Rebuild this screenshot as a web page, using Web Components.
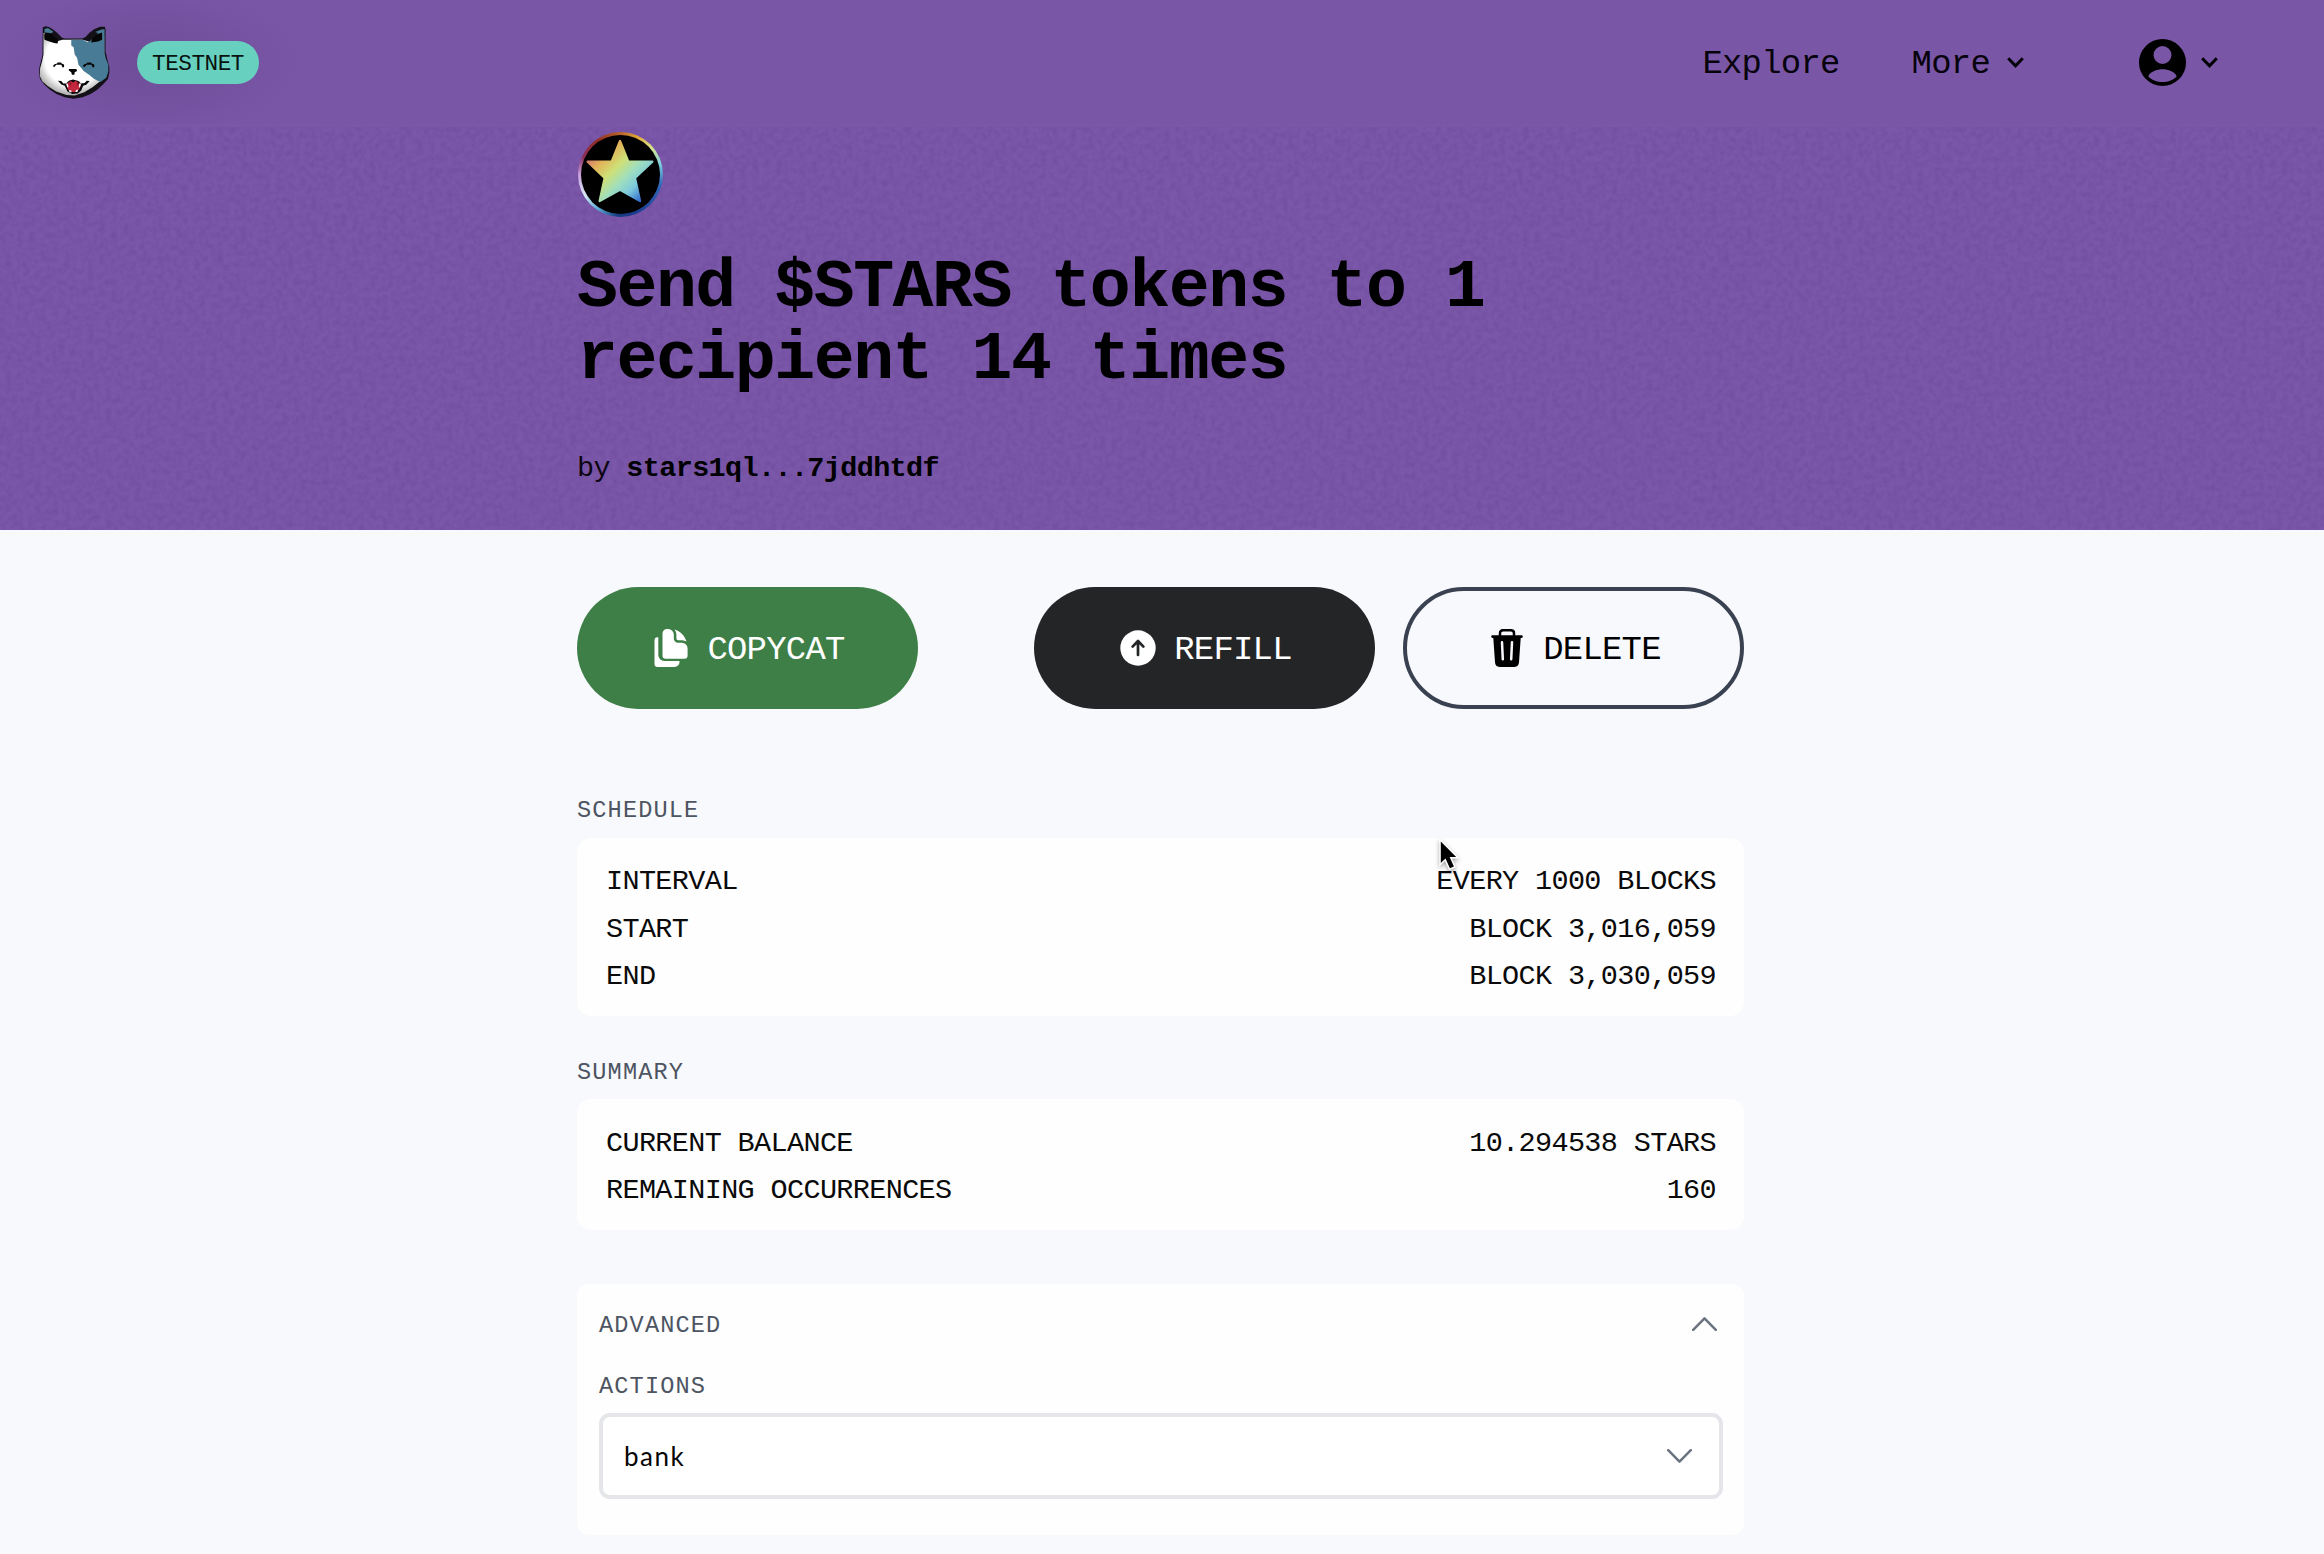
<!DOCTYPE html>
<html lang="en">
<head>
<meta charset="utf-8">
<title>Send $STARS tokens</title>
<style>
  html, body { margin: 0; padding: 0; }
  body {
    width: 2324px; height: 1554px; overflow: hidden; background: #f8f9fc; color: #050505;
    font-family: "Liberation Mono", monospace; font-size: 28.5px; letter-spacing: -0.65px;
  }
</style>
</head>
<body>
<trigger-page></trigger-page>
<script>
const define = (name, html) => {
  const template = document.createElement('template');
  template.innerHTML = html;
  customElements.define(name, class extends HTMLElement {
    constructor() {
      super();
      this.attachShadow({ mode: 'open' }).appendChild(template.content.cloneNode(true));
    }
  });
};

define('cat-logo', `
<style>:host{display:block;width:72px;height:73px} svg{display:block;width:72px;height:73px}</style>
<svg viewBox="117 78 210 216" preserveAspectRatio="none">
  <defs><radialGradient id="f" cx=".5" cy=".42" r=".58"><stop offset=".72" stop-color="#fff"/><stop offset="1" stop-color="#aaa"/></radialGradient></defs>
  <path d="M131 82l8-3 10 2 14 9 12 10 11 12 9 3h50l10-4 12-13 15-11 16-7h14l2 8v66l3 12 3 15 5 18v18l-4 18-14 15-18 17-20 13-22 9-26 4-26-4-24-10-20-13-16-15-12-16-3-14 1-20 5-20 4-18z" fill="#141018"/>
  <path d="M133 99l12-1 26 26 17-5h60l20 6 24-12 14-14 4 8v58l7 24 1 32-14 16-28 22-24 15-28 10-24-2-30-10-24-16-16-14-8-16 1-22 6-22 4-20z" fill="url(#f)"/>
  <path d="M214 119h34l14 7 6-3 34-34 9-2v70l4 18 7 18v20l-6 18-16 12-9-3-12-7-12-10-16-11-8-10-8-9-4-21-7-10-3-21-7-5z" fill="#487c96"/>
  <path d="M136 87l10-3 16 11-8 5-18-1zM284 96l18-8 8 3v9l-10 2z" fill="#487c96"/>
  <path d="M137 97l15 2 13 10 11 12-2 9-10-2-14-4-14-5-1-12zM304 97v22l-12 5-20 3 3-12 12-12z" fill="#050505"/>
  <path d="M160 197l5-6 8-2 1-3h10l2 3 7 3v8h-5l-3-7h-15l-5 6zM247 197l5-6 7-2 2-3h10l3 3 7 3v8h-5l-3-7h-14l-6 6z" fill="#08080b"/>
  <path d="M207 205h22l2 6-7 4-1 7h-7l-2-7-7-5z" fill="#050505"/>
  <path d="M175 240l10 1 6 7h8l8-8 12-4 16 5 8 7 10-1 6-7 9 1-10 11-9 3-6 14-10 9-16 1-14-7-8-17-10-4z" fill="#09080b"/>
  <path d="M203 247l10-6 6 4 8-5 10 8 6 2-4 12-6 8-11 4-14-3-5-8-3-13z" fill="#c4283d"/>
  <path d="M207 245l5 12 3-11zM231 246l-2 10 8-8z" fill="#83152a"/>
  <path d="M199 248l5 1 2 10h-4zM237 248h6l-4 12-3-1zM207 267l7 2 1 5h-6zM228 267l6-1-2 7h-6z" fill="#fff"/>
</svg>`);

define('chevron-icon', `
<style>:host{display:block;width:17px;height:11px} svg{display:block;width:100%;height:100%;overflow:visible}</style>
<svg viewBox="0 0 17 11" fill="none" stroke="currentColor" stroke-width="3"><path d="M1.2 1.3l7.3 7.6 7.3-7.6"/></svg>`);

define('thin-chevron', `
<style>:host{display:block;width:25px;height:14px;color:#6b7280} :host([up]){transform:scaleY(-1)} svg{display:block}</style>
<svg width="25" height="14" fill="none" stroke="currentColor" stroke-width="2.5" stroke-linecap="round" stroke-linejoin="round"><path d="M1.2 1.2l11.3 11.4L23.8 1.2"/></svg>`);

define('net-badge', `
<style>:host{display:flex;align-items:center;justify-content:center;width:122px;height:43px;border-radius:22px;background:#68d0be;color:#08130f;font-size:22.7px;line-height:26px;letter-spacing:-.5px}
span{padding-top:3px}</style>
<span><slot></slot></span>`);

define('top-bar', `
<style>
  :host{display:flex;align-items:center;height:124px;padding:0 106px 0 38px;box-sizing:border-box;font-size:33.9px;line-height:40px;letter-spacing:-.74px;color:#07030c;
    background:radial-gradient(ellipse 150px 75px at 150px 62px,rgba(60,40,90,.2),rgba(60,40,90,0)),#7a56a7}
  net-badge{margin-left:27px}
  .t{padding-top:4px}
  .ex{margin-left:auto}
  .more{display:flex;align-items:center;margin-left:72px;gap:17px}
  .user{display:flex;align-items:center;margin-left:115px;gap:15px;color:#000}
  svg{display:block}
</style>
<cat-logo></cat-logo><net-badge>TESTNET</net-badge>
<span class="t ex">Explore</span>
<div class="more"><span class="t">More</span><chevron-icon></chevron-icon></div>
<div class="user">
  <svg width="47" height="47" viewBox="0 0 47 47"><path fill="#000" fill-rule="evenodd" d="M23.5 0a23.5 23.5 0 1 0 0 47a23.5 23.5 0 1 0 0-47zM23.5 7a9 9 0 1 1 0 18a9 9 0 1 1 0-18zM9.4 37.5c.4-4.600 9-7.300 14.100-7.300s13.700 2.700 14.100 7.300c-3 3.500-8.300 5.500-14.100 5.500s-11.100-2-14.100-5.500z"/></svg>
  <chevron-icon></chevron-icon>
</div>`);

define('stars-token', `
<style>:host{display:block;width:85px;height:85px;border-radius:50%;box-sizing:border-box;padding:3px;
  background:conic-gradient(#b8642c,#e0a83a 25deg,#d9e68c 50deg,#7fd0e0 75deg,#2f66b8 105deg,#1c3a8c 160deg,#173c80 185deg,#5fb0d8 215deg,#d8e8f4 240deg,#c9a0dc 270deg,#8c2f5c 295deg,#8f2c22 325deg,#b8642c)}
svg{display:block;width:79px;height:79px}</style>
<svg viewBox="64 75 237 237"><defs><linearGradient id="s" x1="100" y1="120" x2="250" y2="270" gradientUnits="userSpaceOnUse"><stop offset="0" stop-color="#cf6a72"/><stop offset=".2" stop-color="#e2b259"/><stop offset=".4" stop-color="#cfe076"/><stop offset=".6" stop-color="#a0dfbd"/><stop offset=".78" stop-color="#7cc9dc"/><stop offset="1" stop-color="#2b62cc"/></linearGradient></defs>
<circle cx="182.500" cy="193.500" r="118.500" fill="#000"/>
<path d="M181 93l25 62h72l-52 49 15 69-60-34-61 34 15-69-51-49h72z" fill="url(#s)" stroke="url(#s)" stroke-width="7" stroke-linejoin="round"/></svg>`);

define('page-hero', `
<style>
  :host{display:block;height:530px;background:#7b57a9;position:relative;overflow:hidden}
  .grain{position:absolute;left:0;top:127px;width:2324px;height:403px}
  .body{position:relative;padding:8px 580px 0 577px}
  stars-token{margin-left:1px}
  h1{margin:35px 0 0;font-size:68.2px;line-height:72px;font-weight:700;letter-spacing:-1.47px;color:#000}
  .by{margin-top:53px;line-height:40px;color:#0d0612}
  b{color:#000}
</style>
<svg class="grain" width="2324" height="403"><filter id="n" x="0" y="0" width="100%" height="100%" color-interpolation-filters="sRGB"><feTurbulence type="fractalNoise" baseFrequency=".17" numOctaves="2" seed="4"/><feColorMatrix values="0 0 0 0 .38  0 0 0 0 .25  0 0 0 0 .57  .7 0 0 0 -.24"/></filter><rect width="2324" height="403" filter="url(#n)"/></svg>
<slot name="bar"></slot>
<div class="body">
  <stars-token></stars-token>
  <h1><slot name="title"></slot></h1>
  <div class="by">by <b><slot name="author"></slot></b></div>
</div>`);

define('pill-button', `
<style>
  :host{display:flex;align-items:center;justify-content:center;gap:17px;width:341px;height:122px;box-sizing:border-box;border-radius:61px;font-size:33.9px;line-height:40px;letter-spacing:-.74px;padding-left:2px;color:#fff;background:#242527}
  :host([kind=copy]){background:#3e7f47}
  :host([kind=outline]){background:transparent;border:4px solid #3a4252;color:#000}
  .t{padding-top:4px}
</style>
<slot name="icon"></slot><span class="t"><slot></slot></span>`);

define('section-label', `
<style>:host{display:block;font-size:23.6px;line-height:32px;letter-spacing:1.14px;color:#4d5462}</style><slot></slot>`);

define('info-card', `
<style>:host{display:block;background:#fefefe;border-radius:14px;padding:20.500px 28px 15.500px 29px}</style><slot></slot>`);

define('info-row', `
<style>:host{display:flex;justify-content:space-between;line-height:47.5px;color:#0a0a0a}</style><span><slot name="k"></slot></span><span><slot></slot></span>`);

define('select-box', `
<style>:host{display:flex;align-items:center;justify-content:space-between;box-sizing:border-box;height:86px;border:4px solid #e5e6ea;border-radius:11px;padding:0 27px 0 21px;background:#fff;color:#050505;font:400 26px/32px Lato,sans-serif;letter-spacing:1.5px}
span{padding-bottom:1px}</style>
<span><slot></slot></span><thin-chevron></thin-chevron>`);

define('advanced-panel', `
<style>:host{display:block;box-sizing:border-box;height:251px;background:#fefefe;border-radius:12px;padding:26px 21px 0 22px}
.head{display:flex;align-items:center;justify-content:space-between;padding-right:6px;margin-bottom:29px}
.head thin-chevron{margin-bottom:4px}
select-box{margin-top:10px}</style>
<div class="head"><section-label>ADVANCED</section-label><thin-chevron up></thin-chevron></div>
<section-label>ACTIONS</section-label>
<select-box>bank</select-box>`);

define('mouse-pointer', `
<style>:host{position:absolute;left:1436px;top:836px;width:30px;height:40px} svg{display:block;overflow:visible;filter:drop-shadow(0 2px 2px rgba(0,0,0,.35))}</style>
<svg width="30" height="40"><path d="M4.800 5.600v21.400l4.700-4.500 4.400 9.700 4-1.800-4.300-9.400h6.600z" fill="#000" stroke="#fff" stroke-width="3" paint-order="stroke" stroke-linejoin="miter"/></svg>`);

define('trigger-page', `
<style>
  :host{display:block}
  main{width:1167px;margin-left:577px;padding-top:57px}
  .actions{display:flex;gap:28px}
  .actions .first{margin-right:auto}
  svg{display:block}
  .s1{margin-top:86.400px}.s2{margin-top:40.300px}
  info-card{margin-top:10.600px}
  advanced-panel{margin-top:54px}
</style>
<page-hero>
  <top-bar slot="bar"></top-bar>
  <span slot="title">Send $STARS tokens to 1 recipient 14 times</span>
  <span slot="author">stars1ql...7jddhtdf</span>
</page-hero>
<main>
  <div class="actions">
    <pill-button kind="copy" class="first"><svg slot="icon" width="38" height="38" viewBox="0 0 38 38" fill="#fff"><path d="M5 8.200h1.300V26a6 6 0 0 0 6 6h15.200v1a5 5 0 0 1-5 5H5.500a3 3 0 0 1-3-3V11a2.800 2.800 0 0 1 2.500-2.800z"/><path d="M10.500 4.500A4.500 4.500 0 0 1 15 0h1.200a5.600 5.600 0 0 1 5.600 5.600v4a4.200 4.200 0 0 0 4.200 4.200h4a5.600 5.600 0 0 1 5.600 5.600v7.100a3.200 3.200 0 0 1-3.200 3.200H13.700a3.200 3.200 0 0 1-3.200-3.200z"/><path d="M22.500.6c5.800 1.700 10.300 6.200 12 12a8.600 8.600 0 0 0-4.400-1.400h-4a1.700 1.700 0 0 1-1.700-1.700v-4A8.600 8.600 0 0 0 22.500.6z"/></svg>COPYCAT</pill-button>
    <pill-button><svg slot="icon" width="38" height="38" viewBox="0 0 38 38"><circle cx="19" cy="19" r="17.700" fill="#fff"/><path d="M19 26V12.500M13.600 17.600L19 12l5.400 5.600" fill="none" stroke="#242527" stroke-width="2.700" stroke-linecap="round" stroke-linejoin="round"/></svg>REFILL</pill-button>
    <pill-button kind="outline"><svg slot="icon" width="38" height="38" viewBox="0 0 38 38"><path d="M12 7V4.200C12 2.300 13.300 1.200 15.200 1.200h7.600C24.700 1.200 26 2.300 26 4.200V7" fill="none" stroke="#000" stroke-width="2.500"/><path d="M4.500 6.300h29a1.300 1.300 0 0 1 0 2.600l-.8.100-1.700 24.300c-.2 2.800-1.800 4.700-4.500 4.700h-15c-2.700 0-4.300-1.900-4.500-4.700L5.300 9l-.8-.1a1.300 1.300 0 0 1 0-2.600z" fill="#000"/><path d="M14 13.300l.8 17M24 13.300l-.8 17" stroke="#f8f9fc" stroke-width="2.500" stroke-linecap="round"/></svg>DELETE</pill-button>
  </div>
  <section-label class="s1">SCHEDULE</section-label>
  <info-card>
    <info-row><span slot="k">INTERVAL</span>EVERY 1000 BLOCKS</info-row>
    <info-row><span slot="k">START</span>BLOCK 3,016,059</info-row>
    <info-row><span slot="k">END</span>BLOCK 3,030,059</info-row>
  </info-card>
  <section-label class="s2">SUMMARY</section-label>
  <info-card>
    <info-row><span slot="k">CURRENT BALANCE</span>10.294538 STARS</info-row>
    <info-row><span slot="k">REMAINING OCCURRENCES</span>160</info-row>
  </info-card>
  <advanced-panel></advanced-panel>
</main>
<mouse-pointer></mouse-pointer>`);
</script>
</body>
</html>
